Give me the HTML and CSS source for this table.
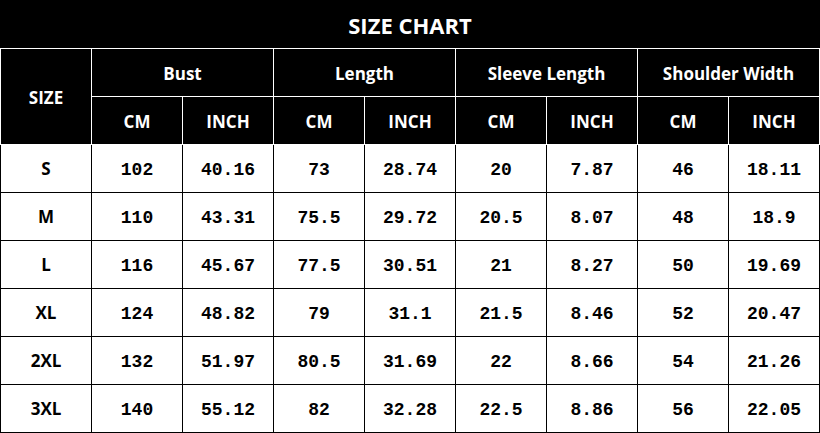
FILE: index.html
```html
<!DOCTYPE html>
<html>
<head>
<meta charset="utf-8">
<link rel="stylesheet" href="styles.css">
</head>
<body>
<table class="chart">
  <colgroup>
    <col><col><col><col><col><col><col><col><col>
  </colgroup>
  <thead>
    <tr class="title-row"><th colspan="9" class="title">SIZE CHART</th></tr>
    <tr class="head-row">
      <th rowspan="2" class="size-head">SIZE</th>
      <th colspan="2">Bust</th>
      <th colspan="2">Length</th>
      <th colspan="2">Sleeve Length</th>
      <th colspan="2">Shoulder Width</th>
    </tr>
    <tr class="head-row">
      <th>CM</th><th>INCH</th><th>CM</th><th>INCH</th><th>CM</th><th>INCH</th><th>CM</th><th>INCH</th>
    </tr>
  </thead>
  <tbody>
    <tr><th class="size">S</th><td>102</td><td>40.16</td><td>73</td><td>28.74</td><td>20</td><td>7.87</td><td>46</td><td>18.11</td></tr>
    <tr><th class="size">M</th><td>110</td><td>43.31</td><td>75.5</td><td>29.72</td><td>20.5</td><td>8.07</td><td>48</td><td>18.9</td></tr>
    <tr><th class="size">L</th><td>116</td><td>45.67</td><td>77.5</td><td>30.51</td><td>21</td><td>8.27</td><td>50</td><td>19.69</td></tr>
    <tr><th class="size">XL</th><td>124</td><td>48.82</td><td>79</td><td>31.1</td><td>21.5</td><td>8.46</td><td>52</td><td>20.47</td></tr>
    <tr><th class="size">2XL</th><td>132</td><td>51.97</td><td>80.5</td><td>31.69</td><td>22</td><td>8.66</td><td>54</td><td>21.26</td></tr>
    <tr><th class="size">3XL</th><td>140</td><td>55.12</td><td>82</td><td>32.28</td><td>22.5</td><td>8.86</td><td>56</td><td>22.05</td></tr>
  </tbody>
</table>
</body>
</html>
```
FILE: styles.css
```css
html, body {
  margin: 0;
  padding: 0;
  background: #fff;
}
.chart {
  width: 820px;
  table-layout: fixed;
  border-collapse: collapse;
  border-spacing: 0;
}
.chart tr {
  height: 48px;
}
.chart th, .chart td {
  padding: 0;
  text-align: center;
  vertical-align: middle;
}
.chart thead th {
  background: #000;
  color: #fff;
  border: 1px solid #fff;
  font-family: "Open Sans", "Liberation Sans", sans-serif;
  font-weight: 700;
  font-size: 17px;
  padding-top: 1px;
}
.chart thead .title {
  border-color: #000;
  border-bottom-color: #fff;
  font-size: 22px;
}
.chart tbody th, .chart tbody td {
  border: 1px solid #000;
  background: #fff;
  color: #000;
}
.chart tbody th.size {
  font-family: "Open Sans", "Liberation Sans", sans-serif;
  font-weight: 700;
  font-size: 17px;
}
.chart tbody td {
  font-family: "Liberation Mono", monospace;
  font-weight: 700;
  font-size: 18px;
  padding-top: 2px;
}
```
